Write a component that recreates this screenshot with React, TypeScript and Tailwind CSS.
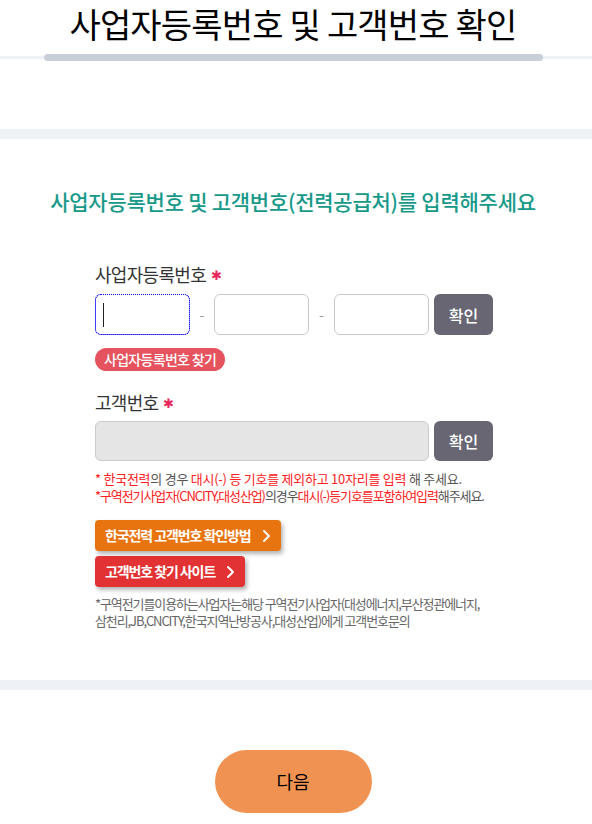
import React from "react";

const font = { fontFamily: '"Noto Sans CJK KR", "Noto Sans", sans-serif' };

const Chevron = () => (
  <svg width="9" height="14" viewBox="0 0 9 14" fill="none" className="ml-[11px]">
    <path d="M2 2 L7 7 L2 12" stroke="white" strokeWidth="2" strokeLinecap="round" strokeLinejoin="round" />
  </svg>
);

const Required = () => (
  <span className="ml-[5px] text-[#e4295b] text-[13px] leading-none">✱</span>
);

const App = () => {
  return (
    <div className="w-[592px] min-h-[824px] bg-white text-[#222]" style={font}>
      {/* header */}
      <div className="flex justify-center pr-[6px] pt-[2px] h-[54px]">
        <h1 className="text-[34px] leading-[44px] tracking-[-0.8px] font-normal text-black">
          사업자등록번호 및 고객번호 확인
        </h1>
      </div>
      <div className="flex items-center h-[7px]">
        <div className="w-[44px] h-[3px] bg-[#eef1f5]" />
        <div className="flex-1 h-[7px] rounded-full bg-[#c8cfd9]" />
        <div className="w-[49px] h-[3px] bg-[#eef1f5]" />
      </div>
      <div className="h-[68px]" />
      <div className="h-[10px] bg-[#eef1f6]" />

      {/* form */}
      <section className="pt-[47px] pb-[51px]">
        <h2 className="text-center pr-[6px] text-[21px] leading-[30px] tracking-[-0.25px] font-medium text-[#17998a]">
          사업자등록번호 및 고객번호(전력공급처)를 입력해주세요
        </h2>

        <div className="pl-[95px] pr-[99px] mt-[45px]">
          <div className="flex items-center text-[18px] leading-[26px] tracking-[-0.7px] text-[#333]">
            사업자등록번호
            <Required />
          </div>
          <div className="flex items-center mt-[7px]">
            <div className="relative w-[95px] h-[41px] rounded-[6px] border border-dotted border-[#0000ff] outline outline-1 outline-dotted outline-[#0000ff] -outline-offset-1">
              <div className="absolute left-[7px] top-[8px] w-[1px] h-[24px] bg-[#222]" />
            </div>
            <div className="w-[24px] text-center text-[#999] text-[14px]">-</div>
            <div className="w-[95px] h-[41px] rounded-[6px] border border-[#c9c9c9] bg-white" />
            <div className="w-[25px] text-center text-[#999] text-[14px]">-</div>
            <div className="w-[95px] h-[41px] rounded-[6px] border border-[#c9c9c9] bg-white" />
            <button className="ml-[5px] w-[59px] h-[41px] rounded-[6px] bg-[#676672] text-white text-[16px] font-medium">
              확인
            </button>
          </div>
          <div className="mt-[11px]">
            <span className="inline-flex items-center h-[23px] px-[9px] rounded-full bg-[#e5545e] text-white text-[14px] font-medium tracking-[-0.7px]">
              사업자등록번호 찾기
            </span>
          </div>

          <div className="flex items-center mt-[18px] text-[18px] leading-[26px] tracking-[-0.7px] text-[#333]">
            고객번호
            <Required />
          </div>
          <div className="flex items-center mt-[6px]">
            <div className="flex-1 h-[40px] rounded-[6px] border border-[#cbcbcb] bg-[#e5e5e5]" />
            <button className="ml-[5px] w-[59px] h-[40px] rounded-[6px] bg-[#676672] text-white text-[16px] font-medium">
              확인
            </button>
          </div>

          <div className="mt-[9px] text-[13px] leading-[17px] text-[#555] whitespace-nowrap">
            <p className="tracking-[-0.25px]">
              <span className="text-[#ff2020]">* 한국전력</span>의 경우{" "}
              <span className="text-[#ff2020]">대시(-) 등 기호를 제외하고 10자리를 입력</span> 해 주세요.
            </p>
            <p className="tracking-[-1.1px]">
              <span className="text-[#ff2020]">*구역전기사업자(CNCITY,대성산업)</span>의경우
              <span className="text-[#ff2020]">대시(-)등기호를포함하여입력</span>해주세요.
            </p>
          </div>

          <div className="flex flex-col items-start gap-[5px] mt-[16px]">
            <button className="flex items-center h-[31px] pl-[10px] pr-[10px] rounded-[4px] bg-[#e8740f] text-white text-[14px] font-semibold tracking-[-1.1px] shadow-[2px_3px_4px_rgba(0,0,0,0.3)]">
              한국전력 고객번호 확인방법
              <Chevron />
            </button>
            <button className="flex items-center h-[31px] pl-[10px] pr-[10px] rounded-[4px] bg-[#e23233] text-white text-[14px] font-semibold tracking-[-1.1px] shadow-[2px_3px_4px_rgba(0,0,0,0.3)]">
              고객번호 찾기 사이트
              <Chevron />
            </button>
          </div>

          <p className="mt-[8px] text-[13px] leading-[17px] tracking-[-1.1px] text-[#666] whitespace-nowrap">
            *구역전기를이용하는사업자는해당 구역전기사업자(대성에너지,부산정관에너지,
            <br />
            삼천리,JB,CNCITY,한국지역난방공사,대성산업)에게 고객번호문의
          </p>
        </div>
      </section>

      <div className="h-[10px] bg-[#eef1f6]" />

      <div className="flex justify-center pr-[6px] pt-[60px] pb-[11px]">
        <button className="w-[157px] h-[63px] rounded-full bg-[#f09352] text-black text-[18px]">
          다음
        </button>
      </div>
    </div>
  );
};

export default App;
